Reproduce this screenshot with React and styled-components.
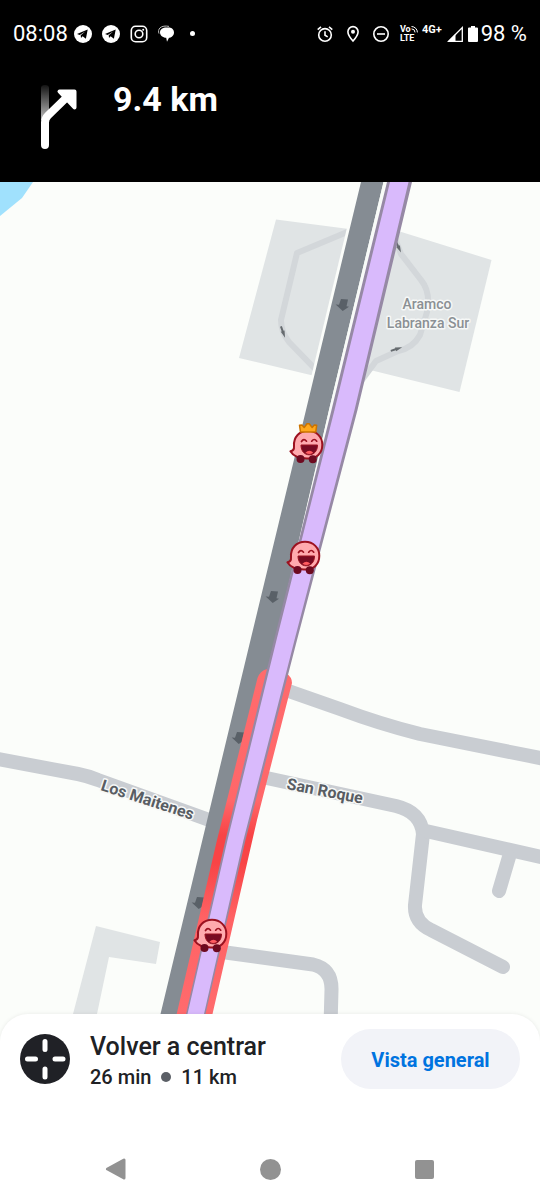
import React from "react";
import styled, { createGlobalStyle } from "styled-components";

const GlobalStyle = createGlobalStyle`
  *, *::before, *::after { box-sizing: border-box; }
  html, body { margin: 0; background: #fff; }
  body { font-family: Roboto, "Liberation Sans", sans-serif; }
  button { font: inherit; color: inherit; border: 0; padding: 0; background: none; cursor: pointer; }
  svg { display: block; flex: none; }
`;

const Screen = styled.div`
  display: flex;
  flex-direction: column;
  min-height: 100vh;
`;

const Header = styled.header`
  background: #000;
  color: #fff;
`;

const StatusBar = styled.div`
  display: flex;
  justify-content: space-between;
  align-items: center;
  height: 67px;
  padding: 0 13px;
  font-size: 22px;
  line-height: 24px;
`;

const StatusGroup = styled.div`
  display: flex;
  align-items: center;
  gap: ${(p) => p.$gap}px;
`;

const Clock = styled.time`
  font-weight: 400;
`;

const Percent = styled.span`
  font-weight: 400;
`;

const Network = styled.span`
  align-self: flex-start;
  padding-top: 2px;
  font-size: 11px;
  line-height: 12px;
  font-weight: 700;
`;

const Volte = styled.span`
  display: grid;
  width: 17px;
  font-size: 9px;
  line-height: 9px;
  font-weight: 700;
`;

const VolteTop = styled.span`
  display: flex;
`;

const Directions = styled.div`
  display: flex;
  align-items: flex-start;
  gap: 31px;
  height: 115px;
  padding: 12px 36px 0;
`;

const Distance = styled.h1`
  margin: 0;
  font-size: 34px;
  line-height: 40px;
  font-weight: 700;
`;

const MapArea = styled.main`
  flex: 1;
  display: flex;
  min-height: 300px;
  background: #fbfdfa;
`;

const MapDrawing = styled.svg`
  flex: 1;
  width: 100%;
  height: auto;
  min-width: 0;
`;

const PlaceLabel = styled.text`
  font-size: 14px;
  font-weight: 500;
  text-anchor: middle;
  fill: #8b9094;
  stroke: #f6f8f7;
  stroke-width: 3px;
  stroke-linejoin: round;
  paint-order: stroke;
`;

const StreetLabel = styled(PlaceLabel)`
  font-size: 16px;
  font-weight: 700;
  text-anchor: start;
  fill: #585d63;
`;

const Sheet = styled.footer`
  position: relative;
  margin-top: -28px;
  border-radius: 28px 28px 0 0;
  background: #fff;
  box-shadow: 0 0 4px rgba(0, 0, 0, 0.08);
`;

const SheetRow = styled.div`
  display: flex;
  justify-content: space-between;
  align-items: center;
  padding: 13px 20px 48px;
`;

const Recenter = styled.button`
  display: flex;
  align-items: center;
  gap: 20px;
  text-align: left;
  color: #202124;
  font-weight: 500;
`;

const RecenterText = styled.span`
  display: grid;
  padding-top: 4px;
`;

const RecenterTitle = styled.span`
  font-size: 25px;
  line-height: 32px;
`;

const Trip = styled.span`
  display: flex;
  align-items: center;
  gap: 10px;
  font-size: 20px;
  line-height: 28px;
`;

const Dot = styled.span`
  width: ${(p) => p.$size}px;
  height: ${(p) => p.$size}px;
  border-radius: 50%;
  background: ${(p) => p.$color};
`;

const DotSlot = styled.span`
  display: flex;
  justify-content: center;
  width: 14px;
`;

const Overview = styled.button`
  width: 179px;
  height: 60px;
  padding-top: 2px;
  border-radius: 30px;
  background: #f2f3f8;
  color: #0073e0;
  font-size: 20px;
  line-height: 24px;
  font-weight: 700;
`;

const SystemNav = styled.nav`
  display: flex;
  height: 60px;
  padding: 0 39px;
`;

const NavButton = styled.button`
  flex: 1;
  display: flex;
  align-items: center;
  justify-content: center;
`;

const TelegramIcon = () => (
  <svg width="18" height="18" viewBox="0 0 18 18" aria-label="Telegram">
    <circle cx="9" cy="9" r="9" fill="#fff" />
    <path d="M3 8.9 13.7 4.6 11.9 13.7 8.6 11.3 7 13 6.7 10.2 11.6 6.3 5.7 9.9Z" fill="#000" />
  </svg>
);

const InstagramIcon = () => (
  <svg width="18" height="18" viewBox="0 0 18 18" fill="none" stroke="#fff" strokeWidth="1.6" aria-label="Instagram">
    <rect x="1.3" y="1.3" width="15.4" height="15.4" rx="4.3" />
    <circle cx="9" cy="9" r="3.8" />
    <circle cx="13.2" cy="4.8" r="1" fill="#fff" stroke="none" />
  </svg>
);

const ChatIcon = () => (
  <svg width="18" height="18" viewBox="0 0 18 18" aria-label="Mensajes">
    <path d="M1 8.600C.2 6.500.5 4.300 2 2.900 4 1 7.500.700 11 1.400" fill="none" stroke="#bbb" strokeWidth="1" />
    <path d="M8.600 2.600h2.200c3.100 0 5.200 2.200 5.200 4.900s-2.100 5.200-5 5.300l-2 4-.8-4C4.800 12.600 2 10.500 2 7.500S4.800 2.600 8.600 2.600Z" fill="#fff" />
  </svg>
);

const AlarmIcon = () => (
  <svg width="18" height="18" viewBox="0 0 18 18" fill="none" stroke="#fff" strokeWidth="1.6" aria-label="Alarma">
    <circle cx="9" cy="9.900" r="6.300" />
    <path d="M9 6.200v4l2.700 1.700M1.700 4.600 5 1.800M16.300 4.600 13 1.800" />
  </svg>
);

const PinIcon = () => (
  <svg width="18" height="18" viewBox="0 0 18 18" aria-label="Ubicación">
    <path d="M9 1.600a5.100 5.100 0 0 0-5.100 5.100C3.900 10.300 9 16 9 16s5.100-5.700 5.100-9.300A5.100 5.100 0 0 0 9 1.600Z" fill="none" stroke="#fff" strokeWidth="1.600" />
    <circle cx="9" cy="6.700" r="2" fill="#fff" />
  </svg>
);

const QuietIcon = () => (
  <svg width="18" height="18" viewBox="0 0 18 18" fill="none" stroke="#fff" strokeWidth="1.600" aria-label="No molestar">
    <circle cx="9" cy="9" r="7.200" />
    <path d="M5 9h8" />
  </svg>
);

const WavesIcon = () => (
  <svg width="7" height="8" viewBox="0 0 7 8" fill="none" stroke="#fff" strokeWidth="1" aria-hidden="true">
    <path d="M.5 1.500A6 6 0 0 1 6.400 7.400M.5 3.900A3.500 3.500 0 0 1 4 7.400" />
  </svg>
);

const SignalIcon = () => (
  <svg width="16" height="16" viewBox="0 0 16 16" aria-label="Señal">
    <path d="M1.700 15.300 15.300 1.600v13.700Z" fill="none" stroke="#fff" strokeWidth="1.300" />
    <path d="M.5 15.800 8.500 7.800v8Z" fill="#fff" />
  </svg>
);

const BatteryIcon = () => (
  <svg width="10" height="16" viewBox="0 0 10 16" aria-label="Batería">
    <path d="M3 0h4v1.500h2a1 1 0 0 1 1 1V15a1 1 0 0 1-1 1H1a1 1 0 0 1-1-1V2.500a1 1 0 0 1 1-1h2Z" fill="#fff" />
  </svg>
);

const TurnIcon = () => (
  <svg width="46" height="72" viewBox="36 79 46 72" aria-label="Gire levemente a la derecha">
    <defs>
      <linearGradient id="fade" x1="0" y1="0" x2="0" y2="1">
        <stop offset="0" stopColor="#fff" stopOpacity="0.080" />
        <stop offset="1" stopColor="#fff" stopOpacity="0.750" />
      </linearGradient>
    </defs>
    <path d="M41 88q0-3 4-3t4 3v32h-8Z" fill="url(#fade)" />
    <path d="M45 145V122.500Q45 118.500 48 115.500L67 97" fill="none" stroke="#fff" strokeWidth="8" strokeLinecap="round" />
    <path d="M59.500 91.500H74.500V107.500Z" fill="#fff" stroke="#fff" strokeWidth="4" strokeLinejoin="round" />
  </svg>
);

const TargetIcon = () => (
  <svg width="50" height="50" viewBox="0 0 50 50" aria-hidden="true">
    <circle cx="25" cy="25" r="25" fill="#202126" />
    <path d="M25 7.500v8M25 35v8M7.500 25h8M35 25h8" stroke="#fff" strokeWidth="5" strokeLinecap="round" />
  </svg>
);

const LaneArrow = ({ x, y }) => (
  <path
    transform={`translate(${x} ${y})`}
    d="M-1-6 6-5.500 4.500 1.200 7 1.700.700 6-6.300-.5-3-.3Z"
    fill="#596067"
  />
);

const RampArrow = ({ x, y, angle }) => (
  <path transform={`translate(${x} ${y}) rotate(${angle})`} d="M-6-1H-1L-1-2 6 0-1 2V1H-6Z" fill="#666b6f" />
);

const Wazer = ({ x, y, crowned }) => (
  <g transform={`translate(${x} ${y})`}>
    <g stroke="#9c1220" strokeWidth="2" strokeLinejoin="round">
      <path
        d="M0-14.200C8.500-14.200 14.300-8 14.300-.300 14.300 8.500 8.500 13.500 0 13.500-8 13.700-14.800 11-17.600 6.300-15 6-13.700 4.500-14 1-14.600-8-8.500-14.200 0-14.200Z"
        fill="#ffaaae"
      />
      <path d="M-7 0H9.500C9.500 6 6 9.800 1.200 9.800S-7 6-7 0Z" fill="#780b22" strokeWidth="1" />
      <path d="M-6.500-3.500Q-4.200-7-1.500-3.800M3.700-3.800Q6.300-7.200 8.700-3.800" fill="none" strokeWidth="1.700" strokeLinecap="round" />
    </g>
    <path d="M-2.600 7.800Q1.300 4 5.200 7.600 1.500 10.500-2.600 7.800Z" fill="#ff5a60" />
    <circle cx="-7.500" cy="14" r="4" fill="#6e0a20" />
    <circle cx="4.800" cy="14.200" r="4" fill="#6e0a20" />
    {crowned && (
      <path
        d="M-7.500-13-8.500-19.800-6-20-3.800-17.500-1-21.200H1.200L4.200-17.500 6.300-20 8.700-19.800 7.800-13Z"
        fill="#ffa91e"
        stroke="#cc7400"
        strokeWidth="1.500"
        strokeLinejoin="round"
      />
    )}
  </g>
);

const RoadMap = () => (
  <MapDrawing viewBox="0 182 540 860" preserveAspectRatio="xMidYMid slice" role="img" aria-label="Mapa de la ruta">
    <defs>
      <linearGradient id="traffic" gradientUnits="userSpaceOnUse" x1="0" y1="670" x2="0" y2="1014">
        <stop offset="0" stopColor="#ff6b6d" />
        <stop offset="0.380" stopColor="#ff6769" />
        <stop offset="0.480" stopColor="#f84446" />
        <stop offset="0.560" stopColor="#f84446" />
        <stop offset="0.720" stopColor="#ff6264" />
        <stop offset="1" stopColor="#ff6b6d" />
      </linearGradient>
    </defs>

    <path d="M0 182H33L22 198 0 216Z" fill="#a0e1fd" />
    <g fill="#e0e4e5">
      <path d="M276 219.500 372 232 340 382 239 358Z" />
      <path d="M395 230 491.500 260 459.500 392 362 368Z" />
      <path d="M96 926 160 942 156 964 109 957 97 1014 90 1045H65L73 1014Z" />
    </g>

    <g fill="none" stroke="#d3d7da" strokeWidth="6" strokeLinejoin="round">
      <path d="M352 230 297 253 281 320Q281 332 289 342L320 374" />
      <path d="M394 236 401 254 421 280Q431 292 427 312L420 335Q413 348 398 351L376 361 356 388" />
    </g>
    <RampArrow x={398.500} y={247} angle={65} />
    <RampArrow x={283} y={332} angle={70} />
    <RampArrow x={396.500} y={349} angle={-18} />

    <g fill="none" stroke="#c9cdd2" strokeWidth="14" strokeLinecap="round" strokeLinejoin="round">
      <path d="M280 688 340 709Q380 724 420 734L550 760" />
      <path d="M262 777 396 806Q421 812 423 834L415 905Q414 922 431 930L503 967" />
      <path d="M426 831 550 859" />
      <path d="M509 857 499 891" />
      <path d="M-8 758 78 774Q88 776 98 780L212 821" />
      <path d="M222 952 313 964.500Q332 969 331.500 990L330 1045" />
    </g>

    <path d="M358 182 302 415 330 415 388 182Z" fill="#fbfdfa" />
    <path d="M361 182 306 410 250.500 640 160.500 1014 153 1045H186L240 800 285 600 329 410 383.500 182Z" fill="#858c93" />
    <path d="M383.500 182H388L333 410 292 572 329 410Z" fill="#f8fbf8" />
    <LaneArrow x={342} y={305} />
    <LaneArrow x={272} y={597} />
    <LaneArrow x={238} y={738} />
    <LaneArrow x={198} y={903} />

    <path
      d="M257.500 678Q260 671 267 669L286 673Q292 677 292 683L257 820 212.500 1014 205 1045H169L176.700 1014 217 840Z"
      fill="url(#traffic)"
    />
    <path d="M387 182 331.500 410 274 640 225.500 840 186 1014 179 1045H199L205.500 1014 245.500 840 297 640 357.500 410 412 182Z" fill="#9689a5" />
    <path d="M390 182 334.500 410 276.500 640 227.500 840 187.500 1014 180.500 1045H197.500L204 1014 243.500 840 294.500 640 354.500 410 408.500 182Z" fill="#d9bafc" />

    <PlaceLabel x="427" y="309">Aramco</PlaceLabel>
    <PlaceLabel x="428" y="328">Labranza Sur</PlaceLabel>
    <StreetLabel transform="translate(100 790) rotate(18)">Los Maitenes</StreetLabel>
    <StreetLabel transform="translate(286 789) rotate(11)">San Roque</StreetLabel>

    <Wazer x={308} y={445} crowned />
    <Wazer x={305} y={556} />
    <Wazer x={212} y={934} />
  </MapDrawing>
);

export default function App() {
  return (
    <Screen>
      <GlobalStyle />
      <Header>
        <StatusBar>
          <StatusGroup $gap={6}>
            <Clock>08:08</Clock>
            <StatusGroup $gap={10}>
              <TelegramIcon />
              <TelegramIcon />
              <InstagramIcon />
              <ChatIcon />
              <DotSlot>
                <Dot $size={5} $color="#fff" />
              </DotSlot>
            </StatusGroup>
          </StatusGroup>
          <StatusGroup $gap={5}>
            <StatusGroup $gap={10}>
              <AlarmIcon />
              <PinIcon />
              <QuietIcon />
              <Volte>
                <VolteTop>
                  Vo
                  <WavesIcon />
                </VolteTop>
                LTE
              </Volte>
            </StatusGroup>
            <Network>4G+</Network>
            <SignalIcon />
            <StatusGroup $gap={3}>
              <BatteryIcon />
              <Percent>98 %</Percent>
            </StatusGroup>
          </StatusGroup>
        </StatusBar>
        <Directions>
          <TurnIcon />
          <Distance>9.4 km</Distance>
        </Directions>
      </Header>

      <MapArea>
        <RoadMap />
      </MapArea>

      <Sheet>
        <SheetRow>
          <Recenter type="button">
            <TargetIcon />
            <RecenterText>
              <RecenterTitle>Volver a centrar</RecenterTitle>
              <Trip>
                26 min <Dot $size={10} $color="#5b5f66" /> 11 km
              </Trip>
            </RecenterText>
          </Recenter>
          <Overview type="button">Vista general</Overview>
        </SheetRow>
        <SystemNav aria-label="Sistema">
          <NavButton type="button" aria-label="Atrás">
            <svg width="22" height="22" viewBox="0 0 22 22">
              <path d="M2.500 11 19 2V20Z" fill="#929292" stroke="#929292" strokeWidth="3" strokeLinejoin="round" />
            </svg>
          </NavButton>
          <NavButton type="button" aria-label="Inicio">
            <Dot $size={21} $color="#929292" />
          </NavButton>
          <NavButton type="button" aria-label="Recientes">
            <svg width="19" height="19" viewBox="0 0 19 19">
              <rect width="19" height="19" rx="2" fill="#929292" />
            </svg>
          </NavButton>
        </SystemNav>
      </Sheet>
    </Screen>
  );
}
